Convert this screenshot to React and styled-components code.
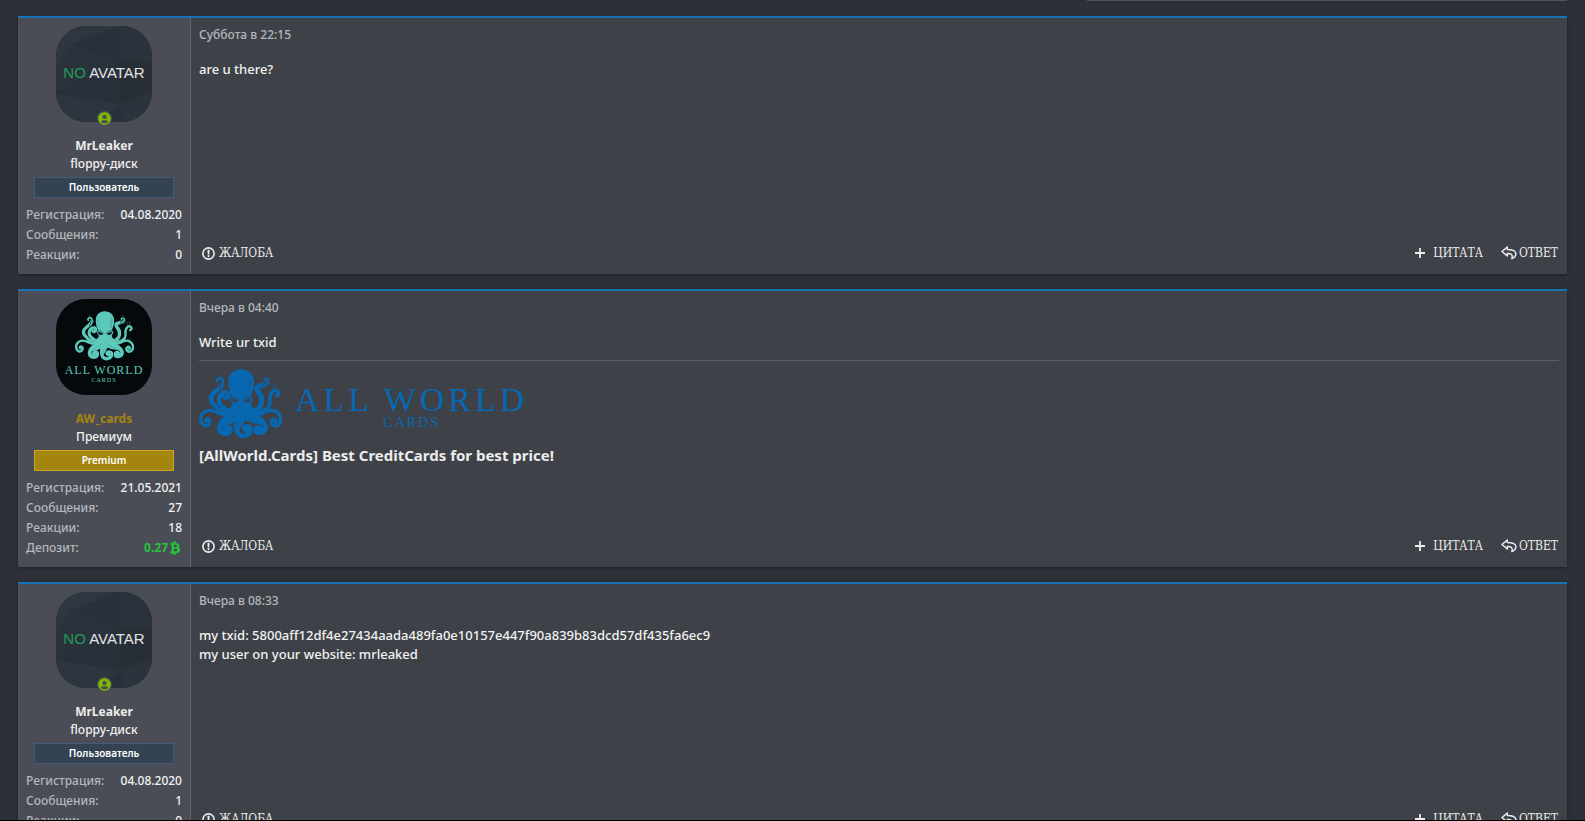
import React from "react";
import styled, { createGlobalStyle } from "styled-components";
import { FaBtc, FaUserCircle } from "react-icons/fa";

const GlobalStyle = createGlobalStyle`
  * {
    box-sizing: border-box;
  }
  body {
    margin: 0;
    background: #2d3037;
    color: #f2f2f2;
    font-family: "Noto Sans", "Open Sans", sans-serif;
    font-size: 13px;
    font-weight: 500;
    line-height: 19px;
  }
`;

const Page = styled.main`
  padding: 0 18px 15px;
`;

const TopEdge = styled.div`
  width: 480px;
  height: 1px;
  margin: 0 0 15px auto;
  background: #505457;
`;

const BottomEdge = styled.div`
  position: fixed;
  left: 0;
  right: 0;
  bottom: 0;
  height: 1px;
  background: #000;
`;

const Thread = styled.div`
  display: flex;
  flex-direction: column;
  gap: 15px;
`;

const Card = styled.article`
  display: flex;
  border-top: 2px solid #1673b5;
  background: #3e4248;
  box-shadow: 0 1px 3px rgba(0, 0, 0, 0.35);
`;

const UserCell = styled.section`
  flex: 0 0 173px;
  display: flex;
  flex-direction: column;
  align-items: center;
  padding: 8px 8px 9px;
  background: #4a4d55;
  border-right: 1px solid #62656c;
`;

const AvatarWrap = styled.div`
  position: relative;
  margin-bottom: 15px;
`;

const Avatar = styled.a`
  position: relative;
  display: flex;
  flex-direction: column;
  align-items: center;
  justify-content: ${(p) => (p.$dark ? "flex-start" : "center")};
  width: 96px;
  height: 96px;
  padding-top: ${(p) => (p.$dark ? "12px" : "0")};
  overflow: hidden;
  border-radius: 30px;
  background: ${(p) => (p.$dark ? "#06090c" : "#28303a")};
  color: ${(p) => (p.$dark ? "#5cc9ba" : "#e4e4e4")};
  text-decoration: none;
`;

const Facets = styled.svg`
  position: absolute;
  inset: 0;
`;

const NoAvatarText = styled.span`
  position: relative;
  padding-bottom: 2px;
  font: 15px/18px "Liberation Sans", sans-serif;
  white-space: nowrap;

  em {
    color: #1f9d57;
    font-style: normal;
  }
`;

const AvatarTitle = styled.span`
  margin-top: 3px;
  font: 12px/12px "Liberation Serif", serif;
  letter-spacing: 1px;
  white-space: nowrap;
`;

const AvatarSub = styled.span`
  font: 6px/8px "Liberation Serif", serif;
  letter-spacing: 1px;
`;

const Online = styled.span`
  position: absolute;
  left: 41px;
  bottom: -4px;
  display: flex;
  padding: 1px;
  border-radius: 50%;
  background: #4a4d55;
  color: #7fba00;
`;

const UserName = styled.a`
  color: ${(p) => (p.$gold ? "#a5850f" : "#ececec")};
  font-size: 12px;
  font-weight: 700;
  line-height: 18px;
  text-decoration: none;
`;

const UserTitle = styled.div`
  font-size: 12px;
  line-height: 18px;
`;

const Badge = styled.div`
  width: 140px;
  margin: 4px 0 7px;
  border: 1px solid ${(p) => (p.$gold ? "#cfa71d" : "#435a78")};
  background: ${(p) => (p.$gold ? "#a4860f" : "#344352")};
  color: #fff;
  font-size: 10px;
  font-weight: 600;
  line-height: 19px;
  text-align: center;
`;

const Stats = styled.dl`
  align-self: stretch;
  margin: 0;
`;

const Stat = styled.div`
  display: flex;
  justify-content: space-between;
  font-size: 12px;
  line-height: 20px;

  dt {
    color: #b3b8be;
  }
  dd {
    display: flex;
    align-items: center;
    margin: 0;
  }
`;

const Deposit = styled.strong`
  display: flex;
  align-items: center;
  color: #25c53b;
`;

const MessageCell = styled.section`
  flex: 1;
  min-width: 0;
  display: flex;
  flex-direction: column;
  padding: 7px 8px 10px;
`;

const Posted = styled.time`
  color: #b3b8be;
  font-size: 12px;
`;

const Message = styled.div`
  margin-top: 16px;
  white-space: pre-line;
`;

const Signature = styled.div`
  margin-top: 8px;
  padding-top: 8px;
  border-top: 1px solid #5b5e65;
`;

const Banner = styled.a`
  display: flex;
  align-items: center;
  gap: 13px;
  width: max-content;
  color: #0767b0;
  text-decoration: none;
`;

const BannerText = styled.span`
  display: flex;
  flex-direction: column;
  align-items: center;
  padding-top: 5px;
  font-family: "Liberation Serif", serif;
  font-weight: 400;
`;

const BannerTitle = styled.span`
  font-size: 34px;
  line-height: 32px;
  letter-spacing: 4px;
`;

const BannerSub = styled.span`
  font-size: 14px;
  line-height: 14px;
  letter-spacing: 2px;
`;

const Slogan = styled.div`
  margin-top: 6px;
  color: #ececec;
  font-size: 15px;
  font-weight: 700;
  line-height: 20px;
`;

const Actions = styled.footer`
  display: flex;
  align-items: center;
  gap: 18px;
  margin-top: auto;
  padding: 0 1px 0 3px;
`;

const Action = styled.button`
  display: flex;
  align-items: center;
  gap: ${(p) => p.$gap || "4px"};
  margin-right: ${(p) => (p.$first ? "auto" : "0")};
  padding: 0;
  border: 0;
  background: none;
  color: #ececec;
  font: 12px/22px "DejaVu Serif Condensed", "DejaVu Serif", serif;
  cursor: pointer;
`;

// [path, stroke width] for every arm, the back ones first
const arms = [
  ["M96 134C66 124 34 108 36 86C38 66 68 62 72 42", 14],
  ["M66 60C74 48 76 32 66 28C58 26 52 32 56 38", 7],
  ["M98 130C78 120 56 108 60 88C64 70 84 64 88 76C90 84 82 90 76 84", 13],
  ["M156 128C184 124 192 106 188 86C184 70 172 66 174 56C178 46 198 52 206 42", 15],
  ["M196 48C212 44 214 32 204 30C198 28 194 32 198 36", 6],
  ["M160 132C190 132 216 120 214 98C212 78 220 62 232 64C242 66 242 78 234 80", 10],
  ["M104 140C72 152 46 112 18 128C0 138 2 164 16 170C30 174 38 158 28 150C22 148 18 154 22 158", 10],
  ["M150 140C180 152 206 112 232 128C250 138 250 162 236 170C222 176 212 160 222 152C230 148 234 156 230 160", 10],
  ["M104 134C82 144 62 160 62 178C64 196 90 200 94 184C96 174 84 170 80 178", 16],
  ["M150 134C176 144 198 158 200 174C200 194 174 196 170 184C170 176 178 172 184 178", 15],
  ["M128 138C112 150 108 178 118 194C132 208 154 200 156 184C156 172 140 168 136 178C136 184 142 186 144 184", 14],
];

const Octopus = ({ width, height, cut }) => (
  <svg width={width} height={height} viewBox="0 0 250 210" fill="none" strokeLinecap="round" strokeLinejoin="round" aria-hidden="true">
    {arms.map(([d, w]) => (
      <g key={d}>
        <path d={d} stroke={cut} strokeWidth={w + 4} />
        <path d={d} stroke="currentColor" strokeWidth={w} />
      </g>
    ))}
    <path
      fill="currentColor"
      d="M126 0C104 0 88 16 88 38C88 56 92 68 98 80C90 86 92 96 100 100C102 112 92 120 76 120C60 120 50 112 44 106C48 126 64 138 82 142C78 154 68 160 62 172C86 168 104 164 114 154C110 168 112 180 118 186C128 178 132 166 138 154C152 164 176 162 198 170C192 158 176 150 170 142C194 140 212 130 216 112C204 122 184 124 172 120C160 116 154 110 156 100C164 96 166 86 156 80C162 68 166 56 166 38C166 16 148 0 126 0Z"
    />
    <g stroke={cut} strokeWidth="2">
      <path d="M97 88C104 92 112 90 118 96C112 102 100 100 97 88ZM157 88C150 92 142 90 136 96C142 102 154 100 157 88Z" fill={cut} />
      <path d="M96 80C106 84 116 86 122 94M158 80C148 84 138 86 132 94" />
    </g>
    <g stroke={cut} opacity="0.6">
      <path d="M96 34C96 50 100 62 104 72M158 34C158 50 154 62 150 72M153 26C154 42 150 56 148 64" />
      <path d="M101 108C94 122 80 130 66 128M156 108C164 122 178 130 194 127M112 140C96 146 86 160 80 164M144 142C156 154 170 158 178 162" />
      <path d="M124 158C118 170 122 182 132 188M48 84C44 94 52 104 60 108M202 82C204 96 196 108 186 112" />
    </g>
    <g stroke="currentColor" strokeWidth="2" opacity="0.6">
      <path d="M58 26L62 18L66 26M197 26L201 18L204 24M222 46H234V58H222ZM28 112L22 104M232 120L234 112" />
    </g>
  </svg>
);

const AlertIcon = () => (
  <svg width="13" height="13" viewBox="0 0 13 13" fill="none" aria-hidden="true">
    <circle cx="6.5" cy="6.5" r="5.6" stroke="currentColor" strokeWidth="1.6" />
    <path d="M5.4 2.8h2.2L7.3 7.4H5.7z" fill="currentColor" />
    <circle cx="6.5" cy="9.1" r="1.1" fill="currentColor" />
  </svg>
);

const PlusIcon = () => (
  <svg width="10" height="10" viewBox="0 0 10 10" stroke="currentColor" strokeWidth="1.8" aria-hidden="true">
    <path d="M5 0v10M0 5h10" />
  </svg>
);

const ReplyIcon = () => (
  <svg width="16" height="14" viewBox="0 0 16 14" fill="none" stroke="currentColor" strokeWidth="1.5" strokeLinejoin="round" aria-hidden="true">
    <path d="M6.3 1L1 5.5L6.3 10V7.4C9.6 7.3 12.1 8 10.9 12.6C14.2 11.1 15.2 8.8 14.7 6.9C13.9 4.1 10.5 3.7 6.3 3.6Z" />
  </svg>
);

const NoAvatar = () => (
  <Avatar href="#user" onClick={(e) => e.preventDefault()}>
    <Facets width="96" height="96" viewBox="0 0 96 96" aria-hidden="true">
      <path d="M0 0H62L16 18L0 40Z" fill="#2e363f" />
      <path d="M62 0H96V36L64 36Z" fill="#2a323b" />
      <path d="M16 18L64 36L0 66V40Z" fill="#2a323c" />
      <path d="M64 78L96 66V96H68Z" fill="#2b333c" />
      <path d="M0 68L64 78L40 96H0Z" fill="#2d353f" />
      <path d="M64 36L96 38V66L64 78Z" fill="#272e36" />
    </Facets>
    <NoAvatarText>
      <em>NO</em> AVATAR
    </NoAvatarText>
  </Avatar>
);

const BrandAvatar = () => (
  <Avatar href="#user" $dark onClick={(e) => e.preventDefault()}>
    <Octopus width={59} height={50} cut="#06090c" />
    <AvatarTitle>ALL WORLD</AvatarTitle>
    <AvatarSub>CARDS</AvatarSub>
  </Avatar>
);

const leaker = {
  name: "MrLeaker",
  title: "floppy-диск",
  badge: "Пользователь",
  online: true,
  stats: [
    ["Регистрация:", "04.08.2020"],
    ["Сообщения:", "1"],
    ["Реакции:", "0"],
  ],
};

const seller = {
  name: "AW_cards",
  title: "Премиум",
  badge: "Premium",
  premium: true,
  stats: [
    ["Регистрация:", "21.05.2021"],
    ["Сообщения:", "27"],
    ["Реакции:", "18"],
  ],
  deposit: "0.27",
};

const posts = [
  { id: 1, user: leaker, date: "Суббота в 22:15", text: "are u there?" },
  { id: 2, user: seller, date: "Вчера в 04:40", text: "Write ur txid", signature: true },
  {
    id: 3,
    user: leaker,
    date: "Вчера в 08:33",
    text: "my txid: 5800aff12df4e27434aada489fa0e10157e447f90a839b83dcd57df435fa6ec9\nmy user on your website: mrleaked",
  },
];

const UserInfo = ({ user }) => (
  <UserCell>
    <AvatarWrap>
      {user.premium ? <BrandAvatar /> : <NoAvatar />}
      {user.online && (
        <Online>
          <FaUserCircle size={13} />
        </Online>
      )}
    </AvatarWrap>
    <UserName href="#user" $gold={user.premium}>
      {user.name}
    </UserName>
    <UserTitle>{user.title}</UserTitle>
    <Badge $gold={user.premium}>{user.badge}</Badge>
    <Stats>
      {user.stats.map(([label, value]) => (
        <Stat key={label}>
          <dt>{label}</dt>
          <dd>{value}</dd>
        </Stat>
      ))}
      {user.deposit && (
        <Stat>
          <dt>Депозит:</dt>
          <dd>
            <Deposit>
              {user.deposit}
              <FaBtc size={14} />
            </Deposit>
          </dd>
        </Stat>
      )}
    </Stats>
  </UserCell>
);

const Post = ({ post }) => (
  <Card>
    <UserInfo user={post.user} />
    <MessageCell>
      <Posted>{post.date}</Posted>
      <Message>{post.text}</Message>
      {post.signature && (
        <Signature>
          <Banner href="#cards">
            <Octopus width={83} height={70} cut="#3e4248" />
            <BannerText>
              <BannerTitle>ALL WORLD</BannerTitle>
              <BannerSub>CARDS</BannerSub>
            </BannerText>
          </Banner>
          <Slogan>[AllWorld.Cards] Best CreditCards for best price!</Slogan>
        </Signature>
      )}
      <Actions>
        <Action type="button" $first>
          <AlertIcon />
          ЖАЛОБА
        </Action>
        <Action type="button" $gap="8px">
          <PlusIcon />
          ЦИТАТА
        </Action>
        <Action type="button" $gap="2px">
          <ReplyIcon />
          ОТВЕТ
        </Action>
      </Actions>
    </MessageCell>
  </Card>
);

const App = () => {
  return (
    <>
      <GlobalStyle />
      <Page>
        <TopEdge />
        <Thread>
          {posts.map((post) => (
            <Post key={post.id} post={post} />
          ))}
        </Thread>
      </Page>
      <BottomEdge />
    </>
  );
};

export default App;
